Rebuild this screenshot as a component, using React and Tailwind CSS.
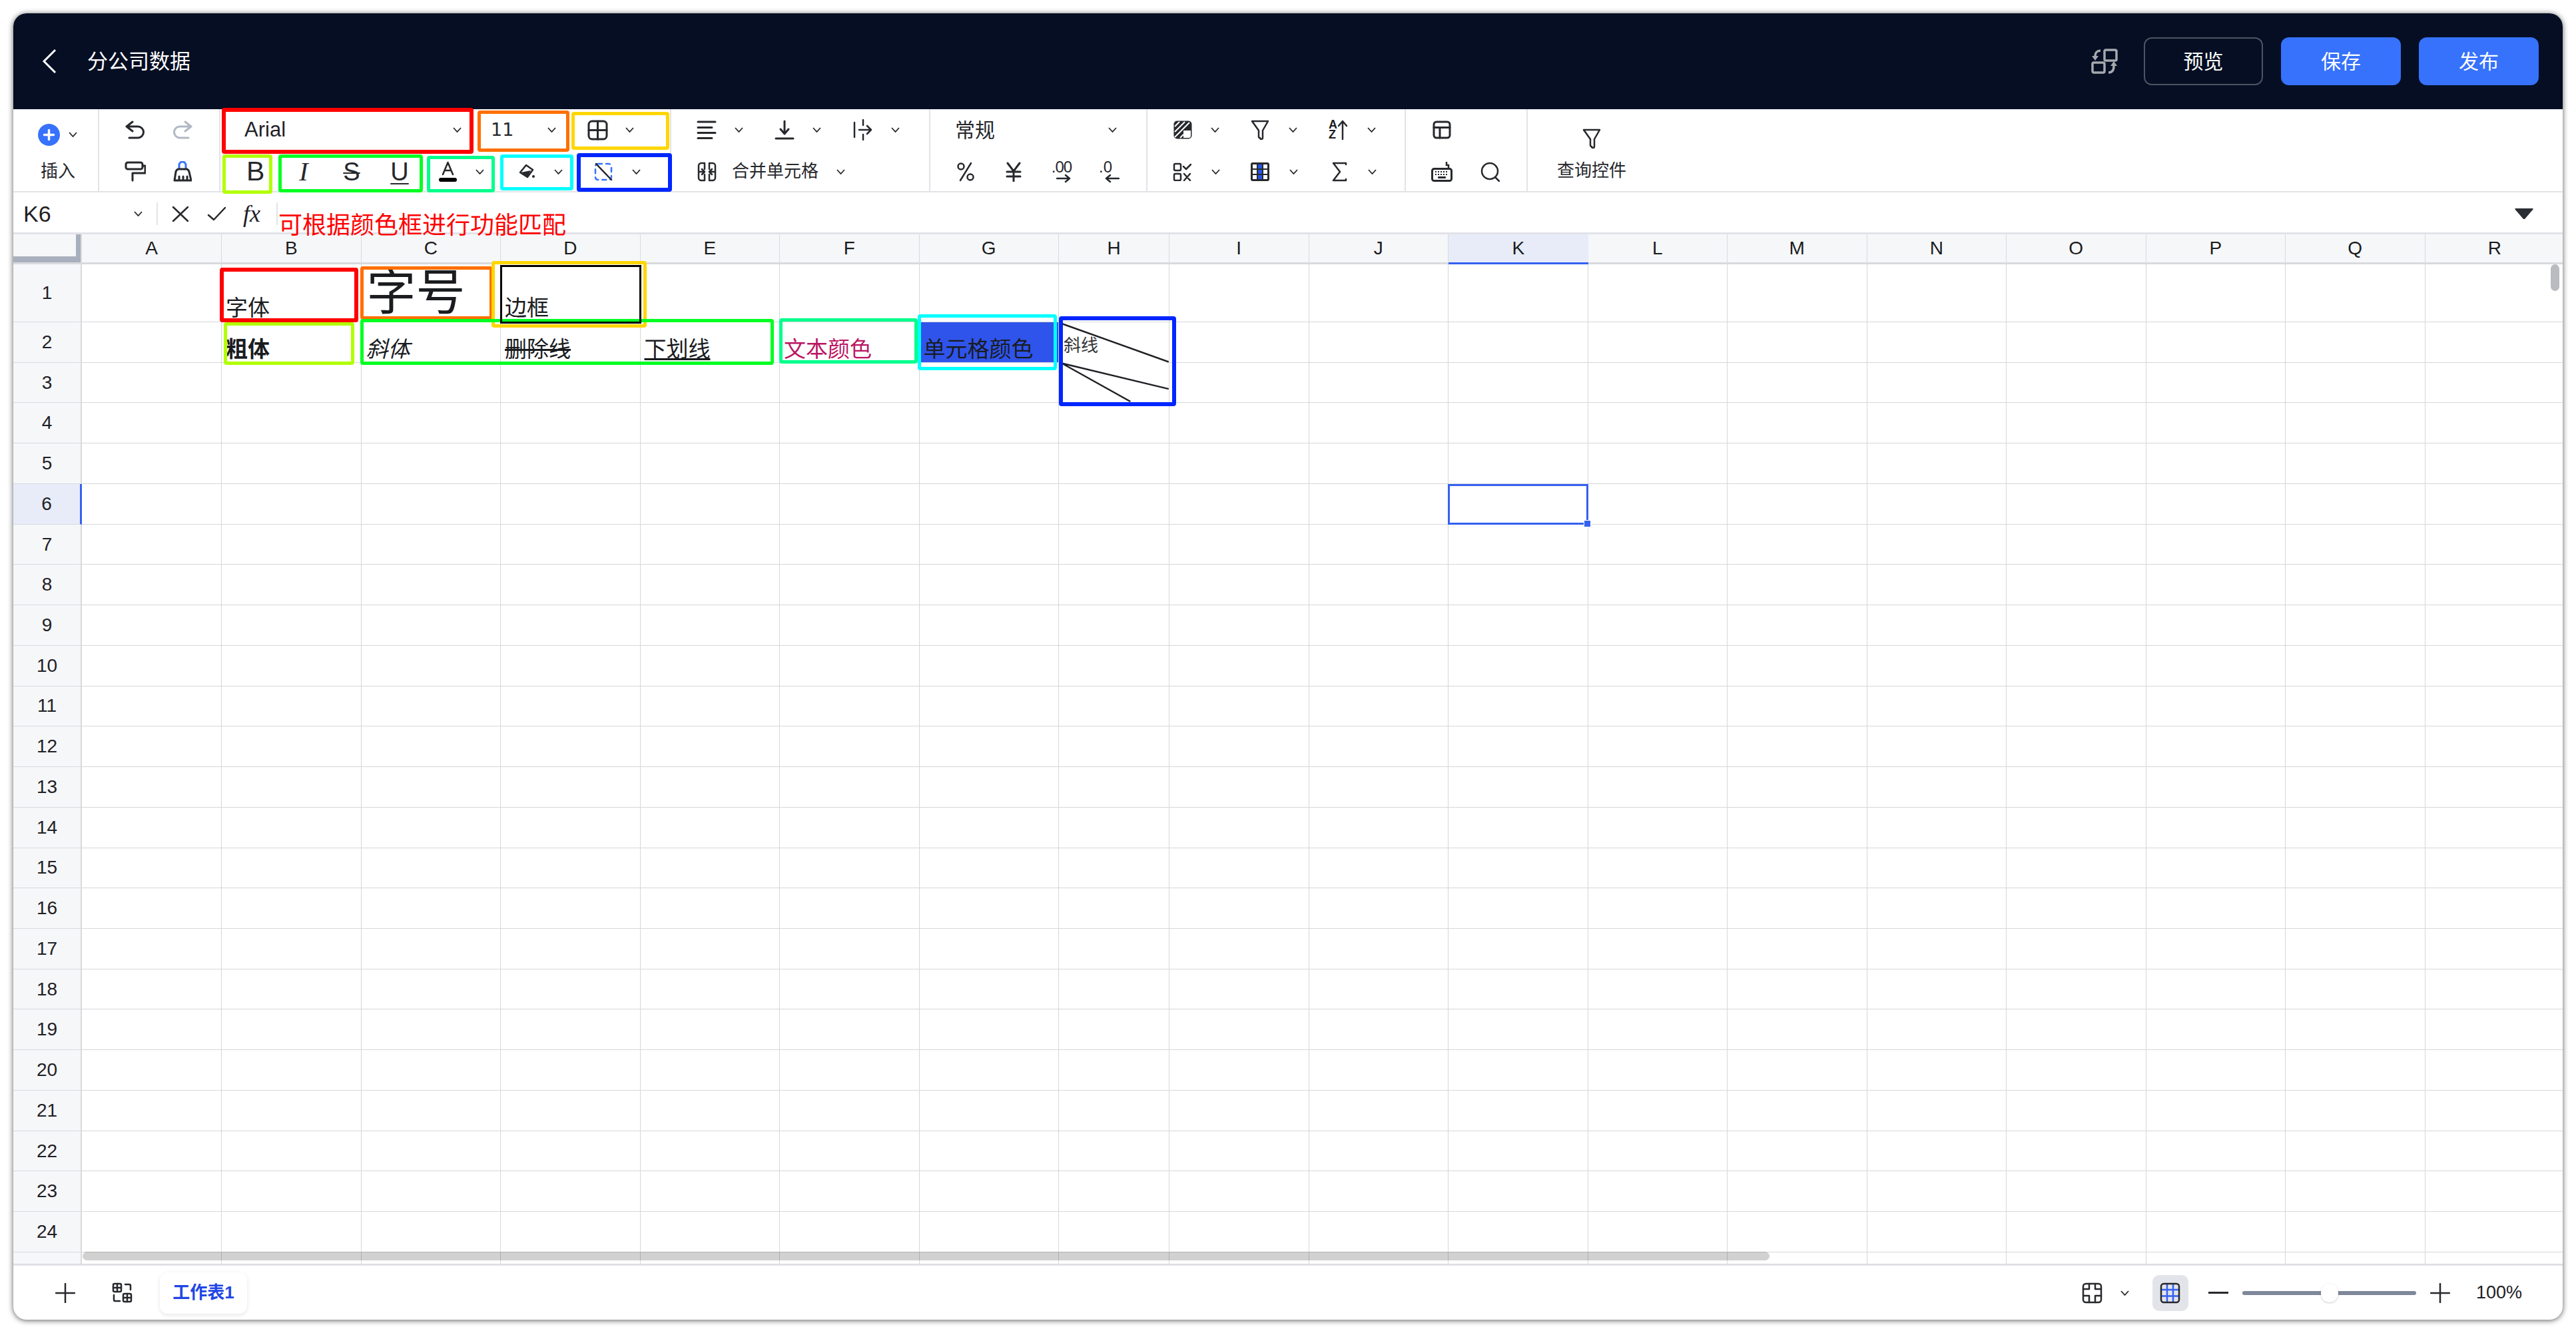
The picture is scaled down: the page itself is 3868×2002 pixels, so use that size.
import React from 'react';

const INK = '#26282c';

const columns = ['A', 'B', 'C', 'D', 'E', 'F', 'G', 'H', 'I', 'J', 'K', 'L', 'M', 'N', 'O', 'P', 'Q', 'R'];
const rows = Array.from({ length: 25 }, (_, i) => i + 1);

const cellContent = {
  B1: <span className="pb-[4px] text-[33px]">字体</span>,
  C1: <span className="pb-[6px] pl-[2px] text-[74px]">字号</span>,
  D1: <span className="pb-[4px] text-[33px]">边框</span>,
  B2: <span className="pb-[3px] text-[33px] font-bold">粗体</span>,
  C2: <span className="pb-[3px] pl-[1px] text-[33px] italic">斜体</span>,
  D2: <span className="pb-[3px] text-[33px] line-through">删除线</span>,
  E2: <span className="pb-[3px] text-[33px] underline">下划线</span>,
  F2: <span className="pb-[3px] text-[33px] text-[#bb1663]">文本颜色</span>,
  G2: <span className="pb-[3px] text-[33px]">单元格颜色</span>,
};

const annotations = [
  'left-[313px] top-[142px] w-[378px] h-[69px] border-[6px] border-[#ff0000]',
  'left-[697px] top-[146px] w-[138px] h-[62px] border-[#ff6f00]',
  'left-[838px] top-[148px] w-[147px] h-[57px] border-[#ffd600]',
  'left-[314px] top-[212px] w-[75px] h-[59px] border-[#b2ff00]',
  'left-[398px] top-[212px] w-[217px] h-[57px] border-[#00ff22]',
  'left-[621px] top-[214px] w-[102px] h-[55px] border-[#00ff8c]',
  'left-[731px] top-[212px] w-[110px] h-[54px] border-[#00ffff]',
  'left-[846px] top-[210px] w-[143px] h-[58px] border-[6px] border-[#0026ff]',
  'left-[310px] top-[382px] w-[208px] h-[82px] border-[6px] border-[#ff0000]',
  'left-[521px] top-[380px] w-[199px] h-[80px] border-[#ff6f00]',
  'left-[718px] top-[372px] w-[233px] h-[100px] border-[#ffd600]',
  'left-[316px] top-[464px] w-[196px] h-[64px] border-[#b2ff00]',
  'left-[521px] top-[459px] w-[621px] h-[69px] border-[#00ff22]',
  'left-[1150px] top-[458px] w-[208px] h-[68px] border-[#00ff8c]',
  'left-[1358px] top-[452px] w-[209px] h-[84px] border-[#00ffff]',
  'left-[1570px] top-[455px] w-[176px] h-[135px] border-[6px] border-[#0026ff]',
];

const Chevron = ({ className = '' }) => (
  <svg width="13" height="8" viewBox="0 0 13 8" className={`shrink-0 ${className}`} fill="none" stroke={INK} strokeWidth="1.8">
    <path d="M1 1l5.5 6L12 1" />
  </svg>
);

const Icon = ({ w, h, className = '', children, sw = 3, stroke = INK }) => (
  <svg width={w} height={h} viewBox={`0 0 ${w} ${h}`} className={`shrink-0 ${className}`} fill="none" stroke={stroke} strokeWidth={sw} strokeLinecap="round" strokeLinejoin="round">
    {children}
  </svg>
);

const Divider = () => <div className="h-[34px] w-[2px] shrink-0 bg-[#e3e4e7]" />;

const App = () => {
  return (
    <div className="min-h-[2002px] bg-white p-[20px] font-['Liberation_Sans','Noto_Sans_CJK_SC',sans-serif] text-[#1a1c1f]">
      <div className="relative flex h-[1962px] w-[3828px] flex-col overflow-hidden rounded-[20px] bg-white shadow-[0_1px_9px_rgba(0,0,0,0.65)]">
        {/* top bar */}
        <header className="flex h-[144px] shrink-0 items-center bg-[#050e23] pr-[36px] text-white">
          <svg width="22" height="38" viewBox="0 0 22 38" fill="none" stroke="#fff" strokeWidth="3" className="ml-[43px]">
            <path d="M20 2L3 19l17 17" />
          </svg>
          <span className="ml-[46px] mt-[2px] text-[31px]">分公司数据</span>
          <svg width="40" height="38" viewBox="0 0 40 38" fill="none" stroke="#a5a8ae" strokeWidth="3.5" className="ml-auto">
            <rect x="20" y="2" width="18" height="16" rx="2" />
            <rect x="2" y="21" width="18" height="15" rx="2" />
            <path d="M14 3c-5 0-8 3-8 8" />
            <path d="M1 11h10l-5 7z" fill="#a5a8ae" stroke="none" />
            <path d="M26 36c6 0 8-4 8-10" />
            <path d="M29 26h10l-5-7z" fill="#a5a8ae" stroke="none" />
          </svg>
          <button className="ml-[39px] h-[72px] w-[179px] rounded-[12px] border-2 border-[#4c5362] text-[30px]">预览</button>
          <button className="ml-[27px] h-[72px] w-[180px] rounded-[12px] bg-[#3672fc] text-[30px]">保存</button>
          <button className="ml-[27px] h-[72px] w-[180px] rounded-[12px] bg-[#3672fc] text-[30px]">发布</button>
        </header>

        {/* toolbar */}
        <div className="flex h-[125px] shrink-0 border-b-2 border-[#e2e3e6] text-[#26282c]">
          <section className="w-[129px] shrink-0 border-r-2 border-[#e2e3e6]">
            <div className="flex h-[62px] items-center pl-[37px] pt-[14px]">
              <svg width="33" height="33" viewBox="0 0 33 33">
                <circle cx="16.5" cy="16.5" r="16.5" fill="#3672fc" />
                <path d="M16.5 9.5v14M9.5 16.5h14" stroke="#fff" strokeWidth="3.5" strokeLinecap="round" />
              </svg>
              <Chevron className="ml-[13px]" />
            </div>
            <div className="flex h-[61px] items-center pl-[41px] pt-[2px] text-[26px]">插入</div>
          </section>

          <section className="w-[182px] shrink-0 border-r-2 border-[#e2e3e6]">
            <div className="flex h-[62px] items-center pl-[39px]">
              <Icon w={30} h={28}>
                <path d="M11 2L2 9l9 7M2 9h17a8.500 8.500 0 0 1 0 17H6" />
              </Icon>
              <Icon w={30} h={28} className="ml-[41px]" stroke="#b1b8c4">
                <path d="M19 2l9 7-9 7M28 9H11a8.500 8.500 0 0 0 0 17h13" />
              </Icon>
            </div>
            <div className="flex h-[61px] items-center pl-[38px] pt-[2px]">
              <Icon w={32} h={31}>
                <rect x="2" y="2" width="25" height="10" rx="3" />
                <path d="M27 7h4v11H12v11" />
              </Icon>
              <Icon w={28} h={31} className="ml-[41px]">
                <path d="M9 11V6a5 5 0 0 1 10 0v5" stroke="#3672fc" />
                <path d="M8 12h12c2 0 3 1 4 4l3 13H2l2-13c1-3 2-4 4-4zM9 29v-6M15 29v-6M21 29v-6" />
              </Icon>
            </div>
          </section>

          <section className="w-[677px] shrink-0 border-r-2 border-[#e2e3e6]">
            <div className="flex h-[62px] items-center">
              <div className="flex w-[369px] items-center justify-between pl-[36px] pr-[7px] text-[31px] text-[#1f2125]">
                Arial
                <Chevron />
              </div>
              <div className="flex w-[140px] items-center justify-between pl-[37px] pr-[5px] font-['DejaVu_Sans',sans-serif] text-[27px]">
                11
                <Chevron />
              </div>
              <Icon w={31} h={31} className="ml-[42px]">
                <rect x="2" y="2" width="27" height="27" rx="5" />
                <path d="M15.500 2v27M2 15.500h27" />
              </Icon>
              <Chevron className="ml-[26px]" />
            </div>
            <div className="flex h-[61px] items-center pt-[2px]">
              <span className="ml-[39px] w-[25px] text-center text-[41px] leading-none">B</span>
              <span className="ml-[25px] w-[72px] text-center font-['Liberation_Serif',serif] text-[40px] leading-none italic">I</span>
              <span className="w-[72px] text-center text-[38px] leading-none line-through decoration-2">S</span>
              <span className="w-[72px] text-center text-[38px] leading-none underline decoration-2 underline-offset-[4px]">U</span>
              <Icon w={29} h={32} className="ml-[22px]" sw={2.5}>
                <path d="M7 20l7.500-18L22 20M9.500 14h10" />
                <rect x="1" y="25" width="27" height="6" rx="3" fill="#000" stroke="none" />
              </Icon>
              <Chevron className="ml-[27px]" />
              <svg width="24" height="21" viewBox="0 0 24 21" className="ml-[52px] shrink-0">
                <path d="M11 1l10 7-8 11-11-7z" fill="none" stroke={INK} strokeWidth="2.5" strokeLinejoin="round" />
                <path d="M3 12l15-3-5 10z" fill={INK} />
                <circle cx="22" cy="18" r="2" fill={INK} />
              </svg>
              <Chevron className="ml-[29px]" />
              <Icon w={28} h={28} className="ml-[47px]" sw={2.5} stroke="#3672fc">
                <rect x="2" y="2" width="24" height="24" rx="4" strokeDasharray="6 6" />
                <path d="M3 2l23 24" stroke={INK} />
              </Icon>
              <Chevron className="ml-[29px]" />
            </div>
          </section>

          <section className="w-[389px] shrink-0 border-r-2 border-[#e2e3e6]">
            <div className="flex h-[62px] items-center">
              <Icon w={30} h={28} className="ml-[38px]">
                <path d="M2 2h26M2 10.500h21M2 18.500h26M2 26.500h21" />
              </Icon>
              <Chevron className="ml-[27px]" />
              <Icon w={30} h={30} className="ml-[47px]">
                <path d="M15 2v18M9 14l6 7 6-7M2 28h26" />
              </Icon>
              <Chevron className="ml-[27px]" />
              <Icon w={29} h={32} className="ml-[48px]" sw={2.500}>
                <path d="M2 5v22M15 1v8M15 23v8M9 16h18M21 10l6 6-6 6" />
              </Icon>
              <Chevron className="ml-[28px]" />
            </div>
            <div className="flex h-[61px] items-center pt-[2px]">
              <Icon w={29} h={30} className="ml-[39px]" sw={2.500}>
                <path d="M11 2H6a4 4 0 0 0-4 4v18a4 4 0 0 0 4 4h5v-9M11 11V2M18 2h5a4 4 0 0 1 4 4v18a4 4 0 0 1-4 4h-5v-9M18 11V2M3 15h7M7 11l4 4-4 4M26 15h-7M22 11l-4 4 4 4" />
              </Icon>
              <span className="ml-[23px] text-[26px]">合并单元格</span>
              <Chevron className="ml-[27px]" />
            </div>
          </section>

          <section className="w-[326px] shrink-0 border-r-2 border-[#e2e3e6]">
            <div className="flex h-[62px] items-center">
              <span className="ml-[37px] text-[30px]">常规</span>
              <Chevron className="ml-[170px]" />
            </div>
            <div className="flex h-[61px] items-center pt-[2px]">
              <Icon w={28} h={30} className="ml-[39px]" sw={2.500}>
                <path d="M22 2L6 28" />
                <circle cx="7" cy="7" r="4.500" />
                <circle cx="21" cy="23" r="4.500" />
              </Icon>
              <Icon w={24} h={30} className="ml-[46px]">
                <path d="M3 2l9 12 9-12M12 14v15M2 15h20M2 22h20" />
              </Icon>
              <div className="ml-[45px] flex w-[30px] flex-col items-center leading-none">
                <span className="text-[24px] leading-[20px] tracking-[-1px]">.00</span>
                <Icon w={22} h={14} className="ml-[6px]" sw={2.500}>
                  <path d="M1 7h19M14 2l6 5-6 5" />
                </Icon>
              </div>
              <div className="ml-[41px] flex w-[31px] flex-col items-start leading-none">
                <span className="text-[24px] leading-[20px]">.0</span>
                <Icon w={22} h={14} className="ml-[9px]" sw={2.500}>
                  <path d="M21 7H2M8 2L2 7l6 5" />
                </Icon>
              </div>
            </div>
          </section>

          <section className="w-[388px] shrink-0 border-r-2 border-[#e2e3e6]">
            <div className="flex h-[62px] items-center">
              <svg width="30" height="30" viewBox="0 0 30 30" className="ml-[38px] shrink-0">
                <rect x="1.500" y="1.500" width="27" height="27" rx="5" fill={INK} />
                <path d="M16 16h11v8a3 3 0 0 1-3 3h-8z" fill="#fff" />
                <path d="M3 10l7-7M3 18l15-15M3 26L25 4M11 27l5-5" stroke="#fff" strokeWidth="2" />
              </svg>
              <Chevron className="ml-[27px]" />
              <Icon w={28} h={30} className="ml-[47px]" sw={2.500}>
                <path d="M2 2h24l-8 14v11a2 2 0 0 1-4 0h-1a2 2 0 0 1-1-2V16z" />
              </Icon>
              <Chevron className="ml-[29px]" />
              <div className="ml-[47px] flex w-[30px] shrink-0 items-center">
                <div className="flex flex-col text-[18px] font-bold leading-[15px] text-[#1a1c1f]">
                  <span>A</span>
                  <span>Z</span>
                </div>
                <Icon w={16} h={31} sw={2.500}>
                  <path d="M8 2v27M2 9l6-7 6 7" />
                </Icon>
              </div>
              <Chevron className="ml-[28px]" />
            </div>
            <div className="flex h-[61px] items-center pt-[2px]">
              <Icon w={28} h={28} className="ml-[38px]" sw={2.500}>
                <rect x="2" y="2" width="10" height="10" rx="2" />
                <rect x="2" y="17" width="10" height="10" rx="2" />
                <path d="M16 6l4 4 7-7M17 17l9 10M26 17l-9 10" />
              </Icon>
              <Chevron className="ml-[30px]" />
              <svg width="28" height="28" viewBox="0 0 28 28" className="ml-[46px] shrink-0">
                <rect width="28" height="28" rx="3" fill={INK} />
                <rect x="3" y="3" width="6" height="6" fill="#fff" />
                <rect x="11" y="3" width="6" height="6" fill="#2455e6" />
                <rect x="19" y="3" width="6" height="6" fill="#fff" />
                <rect x="3" y="11" width="6" height="6" fill="#fff" />
                <rect x="11" y="11" width="6" height="6" fill="#2455e6" />
                <rect x="19" y="11" width="6" height="6" fill="#fff" />
                <rect x="3" y="19" width="6" height="6" fill="#fff" />
                <rect x="11" y="19" width="6" height="6" fill="#2455e6" />
                <rect x="19" y="19" width="6" height="6" fill="#fff" />
              </svg>
              <Chevron className="ml-[30px]" />
              <Icon w={24} h={30} className="ml-[50px]" sw={2.500}>
                <path d="M22 4V2H3l10 13L3 28h19v-2" />
              </Icon>
              <Chevron className="ml-[31px]" />
            </div>
          </section>

          <section className="w-[183px] shrink-0 border-r-2 border-[#e2e3e6]">
            <div className="flex h-[62px] items-center">
              <Icon w={28} h={28} className="ml-[40px]">
                <rect x="2" y="2" width="24" height="24" rx="4" />
                <path d="M2 10.500h24M11 10.500V26" />
              </Icon>
            </div>
            <div className="flex h-[61px] items-center pt-[2px]">
              <svg width="32" height="31" viewBox="0 0 32 31" className="ml-[38px] shrink-0">
                <rect x="1.500" y="11.500" width="29" height="18" rx="3" fill="#fff" stroke={INK} strokeWidth="3" />
                <path d="M26 11V6h-3V1" fill="none" stroke={INK} strokeWidth="2.500" />
                <path d="M6 16h20M6 20h20" stroke={INK} strokeWidth="2" strokeDasharray="2 2" />
                <rect x="10" y="23" width="12" height="3" rx="1" fill={INK} />
              </svg>
              <Icon w={29} h={30} className="ml-[42px]" sw={2.500}>
                <circle cx="14" cy="14" r="12" />
                <path d="M22 23l6 6" />
              </Icon>
            </div>
          </section>

          <section className="ml-[44px] flex w-[104px] flex-col items-center pt-[29px]">
            <Icon w={28} h={31} sw={2.500}>
              <path d="M2 2h24l-8 14v11a2 2 0 0 1-4 0h-1a2 2 0 0 1-1-2V16z" />
            </Icon>
            <span className="mt-[15px] text-[26px] leading-[34px]">查询控件</span>
          </section>
        </div>

        {/* formula bar */}
        <div className="flex h-[63px] shrink-0 items-center border-b-[3px] border-[#e2e3e8] pr-[44px] pt-[4px] text-[#1f2125]">
          <span className="ml-[15px] w-[166px] text-[34px] leading-none">K6</span>
          <Chevron />
          <div className="ml-[21px]"><Divider /></div>
          <Icon w={26} h={25} className="ml-[21px]" sw={2.500}>
            <path d="M2 2l22 21M24 2L2 23" />
          </Icon>
          <Icon w={29} h={22} className="ml-[27px]" sw={2.500}>
            <path d="M2 13l8 7L27 2" />
          </Icon>
          <span className="ml-[25px] w-[30px] font-['Liberation_Serif',serif] text-[36px] leading-none italic">fx</span>
          <div className="ml-[20px]"><Divider /></div>
          <svg width="28" height="18" viewBox="0 0 28 18" className="ml-auto">
            <path d="M2 1h24a1 1 0 0 1 1 2L15 17h-2L1 3a1 1 0 0 1 1-2z" fill="#2b2e33" />
          </svg>
        </div>

        {/* sheet grid */}
        <div className="min-h-0 flex-1 overflow-hidden">
          <div className="grid grid-cols-[103px_210px_repeat(6,209.5px)_166px_repeat(10,209.5px)] grid-rows-[45px_87px_repeat(23,60.74px)_18px]">
            <div className="relative border-b-[3px] border-r-2 border-[#d9dade] bg-[#f6f7f9]">
              <div className="absolute bottom-0 left-0 right-0 h-[9px] bg-[#a9b0bd]" />
              <div className="absolute bottom-0 right-0 top-0 w-[7px] bg-[#a9b0bd]" />
            </div>
            {columns.map((col) => (
              <div
                key={col}
                className={
                  col === 'K'
                    ? 'flex items-center justify-center border-b-[3px] border-b-[#3461f0] bg-[#e8ecf8] text-[28px]'
                    : 'flex items-center justify-center border-b-[3px] border-r border-[#d9dade] bg-[#f6f7f9] text-[28px]'
                }
              >
                {col}
              </div>
            ))}
            {rows.map((row) => (
              <React.Fragment key={row}>
                <div
                  className={
                    row === 6
                      ? 'flex items-center justify-center border-b border-r-[3px] border-b-[#d9dade] border-r-[#3461f0] bg-[#e8ecf8] text-[28px] text-[#1f2125]'
                      : 'flex items-center justify-center border-b border-r-2 border-[#d9dade] bg-[#f6f7f9] text-[28px] text-[#1f2125]'
                  }
                >
                  {row < 25 ? row : ''}
                </div>
                {columns.map((col) => {
                  const id = `${col}${row}`;
                  if (id === 'H3') return null;
                  if (id === 'H2') {
                    return (
                      <div key={id} className="relative row-span-2 flex items-start border-b border-r border-[#d6d7da] pl-[7px] pt-[22px]">
                        <span className="text-[26px] leading-[26px] text-[#33353a]">斜线</span>
                        <svg className="absolute inset-0 h-full w-full" viewBox="0 0 166 121.500" fill="none" stroke="#1f2125" strokeWidth="2.500">
                          <path d="M4 2l162 58M4 62l162 39M4 62l104 58" />
                        </svg>
                      </div>
                    );
                  }
                  return (
                    <div
                      key={id}
                      className={
                        id === 'G2'
                          ? 'flex items-end border-b border-r border-[#d6d7da] bg-[#2f54eb] pl-[6px] leading-none'
                          : 'flex items-end overflow-visible whitespace-nowrap border-b border-r border-[#d6d7da] pl-[6px] leading-none'
                      }
                    >
                      {cellContent[id]}
                    </div>
                  );
                })}
              </React.Fragment>
            ))}
          </div>
        </div>

        {/* bottom bar */}
        <footer className="flex h-[83px] shrink-0 items-center border-t-2 border-[#e4e4ea] pr-[61px]">
          <Icon w={30} h={30} className="ml-[63px]" sw={2.500}>
            <path d="M15 1v28M1 15h28" />
          </Icon>
          <Icon w={31} h={31} className="ml-[55px]" sw={2.500}>
            <rect x="2" y="2" width="12" height="12" rx="2" />
            <path d="M8 2v12M2 8h12" />
            <rect x="17" y="17" width="12" height="12" rx="2" />
            <path d="M23 17v12M17 23h12" />
            <path d="M20 3h6a2 2 0 0 1 2 2v6M3 19v7a2 2 0 0 0 2 2h7" />
          </Icon>
          <div className="ml-[41px] flex h-[62px] w-[131px] items-center justify-center rounded-[12px] text-[26px] font-bold text-[#1f46e5] shadow-[0_2px_6px_rgba(0,0,0,0.1)]">
            工作表1
          </div>
          <Icon w={31} h={32} className="ml-auto" sw={2.500}>
            <rect x="2" y="2" width="27" height="28" rx="4" />
            <path d="M11 2v8H2M20 2v8h9M2 20h9v10M29 20h-9v10" />
          </Icon>
          <Chevron className="ml-[27px]" />
          <div className="ml-[35px] flex h-[54px] w-[54px] items-center justify-center rounded-[10px] bg-[#e3e4ea]">
            <svg width="31" height="32" viewBox="0 0 31 32" fill="none">
              <path d="M11 2v28M20 2v28M2 11h27M2 20.500h27" stroke="#3461f0" strokeWidth="2.500" />
              <rect x="2" y="2" width="27" height="28" rx="4" stroke={INK} strokeWidth="2.500" />
            </svg>
          </div>
          <div className="ml-[30px] h-[3px] w-[30px] bg-[#26282c]" />
          <div className="relative ml-[21px] h-[6px] w-[261px] rounded-full bg-[#7f8899]">
            <div className="absolute left-[118px] top-[-11px] h-[28px] w-[26px] rounded-full bg-white shadow-[0_1px_3px_rgba(0,0,0,0.2)]" />
          </div>
          <Icon w={30} h={30} className="ml-[21px]" sw={2.500}>
            <path d="M15 1v28M1 15h28" />
          </Icon>
          <span className="ml-[39px] text-[27px] text-[#1f2125]">100%</span>
        </footer>

        {/* colour boxes pasted over the screenshot */}
        {annotations.map((cls) => (
          <div key={cls} className={`pointer-events-none absolute rounded-[4px] border-[5px] ${cls}`} />
        ))}
        <div className="pointer-events-none absolute left-[731px] top-[378px] h-[88px] w-[212px] border-[3px] border-black" />
        <span className="absolute left-[398px] top-[299px] text-[36px] leading-[40px] text-[#ff0000]">可根据颜色框进行功能匹配</span>

        {/* selection + scrollbars */}
        <div className="pointer-events-none absolute left-[2154px] top-[707px] h-[61px] w-[211px] border-[3px] border-[#3461f0]">
          <div className="absolute bottom-[-7px] right-[-7px] h-[11px] w-[11px] border border-white bg-[#3461f0]" />
        </div>
        <div className="absolute left-[104px] top-[1860px] h-[13px] w-[2533px] rounded-full bg-[#0000002e]" />
        <div className="absolute left-[3810px] top-[377px] h-[40px] w-[13px] rounded-full bg-[#babbc0]" />
      </div>
    </div>
  );
};

export default App;
